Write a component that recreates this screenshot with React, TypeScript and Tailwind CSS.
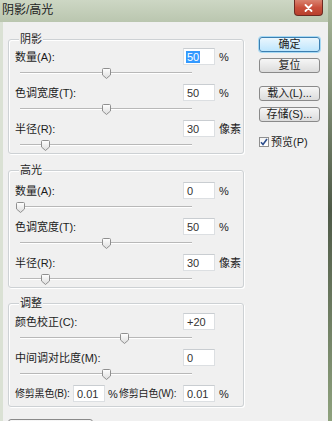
import React from "react";

type rowType = {
  label: string;
  value: string;
  unit: string;
  pos: number;
  selected?: boolean;
};

const shadowRows: rowType[] = [
  { label: "数量(A):", value: "50", unit: "%", pos: 0.5, selected: true },
  { label: "色调宽度(T):", value: "50", unit: "%", pos: 0.5 },
  { label: "半径(R):", value: "30", unit: "像素", pos: 0.151 },
];

const highlightRows: rowType[] = [
  { label: "数量(A):", value: "0", unit: "%", pos: 0 },
  { label: "色调宽度(T):", value: "50", unit: "%", pos: 0.5 },
  { label: "半径(R):", value: "30", unit: "像素", pos: 0.151 },
];

const adjustRows: rowType[] = [
  { label: "颜色校正(C):", value: "+20", unit: "", pos: 0.605 },
  { label: "中间调对比度(M):", value: "0", unit: "", pos: 0.5 },
];

function Field({ value, selected }: { value: string; selected?: boolean }) {
  return (
    <div className="w-[32px] h-[17px] shrink-0 bg-white border border-[#dcdfe2] border-t-[#c9cdd1] flex items-center pl-[2px] text-[11px] text-[#333] font-['Liberation_Sans',sans-serif]">
      {selected ? <span className="bg-[#3399ff] text-white px-[1px] leading-[12px]">{value}</span> : <span className="pl-[1px]">{value}</span>}
    </div>
  );
}

function Thumb() {
  return (
    <svg width="9" height="11" viewBox="0 0 9 11" className="block">
      <defs>
        <linearGradient id="tg" x1="0" y1="0" x2="0" y2="1">
          <stop offset="0" stopColor="#ffffff" />
          <stop offset="1" stopColor="#dcdcdc" />
        </linearGradient>
      </defs>
      <path d="M1.5 0.5 H7.5 Q8.5 0.5 8.5 1.5 V7 L4.5 10.5 L0.5 7 V1.5 Q0.5 0.5 1.5 0.5 Z" fill="url(#tg)" stroke="#8f8f8f" />
    </svg>
  );
}

function Slider({ pos }: { pos: number }) {
  return (
    <div className="relative h-[16px] pt-[7px] ml-[11px] w-[172px]">
      <div className="h-[2px] border-t border-[#b8b8b8] border-b border-b-white" />
      <div className="absolute top-[3px]" style={{ left: pos * 172 - 4.5 }}>
        <Thumb />
      </div>
    </div>
  );
}

function Row({ row }: { row: rowType }) {
  return (
    <div className="flex flex-col">
      <div className="flex items-center h-[17px]">
        <span className="w-[174px] pl-[6px] whitespace-nowrap">{row.label}</span>
        <Field value={row.value} selected={row.selected} />
        <span className="ml-[4px] whitespace-nowrap">{row.unit}</span>
      </div>
      <Slider pos={row.pos} />
    </div>
  );
}

function Group({ title, className, children }: { title: string; className: string; children: React.ReactNode }) {
  return (
    <div className={`relative border border-[#cdd1d4] rounded-[3px] shadow-[inset_1px_1px_0_#fff,1px_1px_0_#fff] ${className}`}>
      <span className="absolute top-[-8px] left-[10px] px-[1px] bg-[#f0f0f0] leading-[14px]">{title}</span>
      {children}
    </div>
  );
}

function Btn({ label, primary }: { label: string; primary?: boolean }) {
  return (
    <div
      className={`w-[61px] h-[15px] rounded-[3px] flex items-center justify-center text-[11px] leading-none ${
        primary
          ? "border border-[#3c7fb1] bg-gradient-to-b from-[#eaf6fd] to-[#bee6fd] shadow-[0_0_0_1px_#a6d9f4]"
          : "border border-[#8a8a8a] bg-gradient-to-b from-[#f6f6f6] to-[#dcdcdc]"
      }`}
    >
      {label}
    </div>
  );
}

export default function App() {
  return (
    <div className="w-[332px] h-[421px] overflow-hidden flex text-[11px] leading-[14px] text-[#1c1c1c] font-['Liberation_Sans','Noto_Sans_CJK_SC',sans-serif]">
      <div className="w-[328px] flex flex-col">
        {/* title bar */}
        <div className="h-[22px] shrink-0 flex items-start bg-gradient-to-b from-[#cdd7c4] to-[#bac6af] pl-[2px]">
          <span className="mt-[3px] text-[12px] leading-[15px] text-[#222]">阴影/高光</span>
          <div className="ml-auto mr-[5px] w-[29px] h-[16px] rounded-b-[4px] border border-t-0 border-[#6d2a22] bg-gradient-to-b from-[#d9826f] via-[#c9503c] to-[#b8402d] flex items-center justify-center">
            <svg width="9" height="8" viewBox="0 0 9 8">
              <path d="M1.5 1 L7.5 7 M7.5 1 L1.5 7" stroke="#fff" strokeWidth="1.8" strokeLinecap="round" />
            </svg>
          </div>
        </div>

        <div className="flex-1 bg-[#f0f0f0] border-l-[3px] border-[#dae1d4] flex">
          {/* left panel */}
          <div className="w-[241px] pl-[5px] pt-[17px] shrink-0">
            <Group title="阴影" className="pt-[8px] flex flex-col gap-[3px]">
              {shadowRows.map((r, i) => (
                <Row key={i} row={r} />
              ))}
            </Group>

            <Group title="高光" className="mt-[16px] pt-[11px] flex flex-col gap-[3px]">
              {highlightRows.map((r, i) => (
                <Row key={i} row={r} />
              ))}
            </Group>

            <Group title="调整" className="mt-[15px] pt-[9px] pb-[4px] flex flex-col gap-[3px]">
              {adjustRows.map((r, i) => (
                <Row key={i} row={r} />
              ))}
              <div className="flex items-center h-[17px] pl-[6px] whitespace-nowrap">
                <span className="w-[58px] text-[10px] tracking-[-0.2px]">修剪黑色(B):</span>
                <Field value="0.01" />
                <span className="w-[12px] pl-[3px]">%</span>
                <span className="w-[66px] pl-[2px] text-[10px] tracking-[-0.2px]">修剪白色(W):</span>
                <Field value="0.01" />
                <span className="ml-[4px]">%</span>
              </div>
            </Group>

            <div className="mt-[12px] w-[85px] h-[20px] rounded-[3px] border border-[#8a8a8a] bg-gradient-to-b from-[#f6f6f6] to-[#dcdcdc]" />
          </div>

          {/* right panel */}
          <div className="ml-[15px] pt-[15px] flex flex-col">
            <Btn label="确定" primary />
            <div className="mt-[6px]">
              <Btn label="复位" />
            </div>
            <div className="mt-[13px]">
              <Btn label="载入(L)..." />
            </div>
            <div className="mt-[6px]">
              <Btn label="存储(S)..." />
            </div>
            <div className="mt-[13px] flex items-center gap-[2px]">
              <div className="w-[10px] h-[10px] border border-[#8f8f8f] bg-gradient-to-b from-[#f4f4f4] to-[#ffffff] flex items-center justify-center">
                <svg width="8" height="8" viewBox="0 0 8 8">
                  <path d="M1 4.2 L3 6.5 L7 1" fill="none" stroke="#2c4d8c" strokeWidth="1.6" />
                </svg>
              </div>
              <span>预览(P)</span>
            </div>
          </div>
        </div>
      </div>
      {/* desktop edge */}
      <div className="w-[4px] bg-gradient-to-b from-[#a9b89a] via-[#4f5a48] to-[#8fa27e]" />
    </div>
  );
}
